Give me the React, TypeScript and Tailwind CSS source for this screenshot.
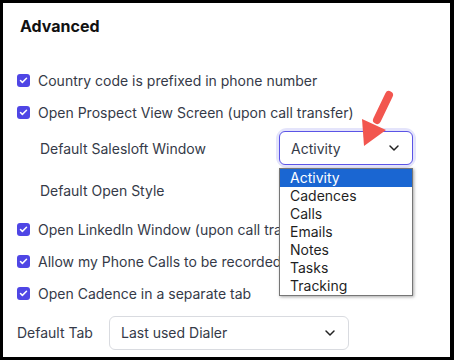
import { Check, ChevronDown } from "lucide-react";

const options = ["Activity", "Cadences", "Calls", "Emails", "Notes", "Tasks", "Tracking"];

function Box() {
  return (
    <span className="flex h-[13px] w-[13px] shrink-0 items-center justify-center rounded-[3px] bg-[#4f46e5]">
      <Check className="h-[9px] w-[9px] text-white" strokeWidth={4} />
    </span>
  );
}

function CheckRow({ label, h = "h-8" }: { label: string; h?: string }) {
  return (
    <div className={`flex items-center gap-[8px] pl-[14px] ${h}`}>
      <Box />
      <span className="whitespace-nowrap">{label}</span>
    </div>
  );
}

export default function App() {
  return (
    <div
      className="relative h-[360px] w-[454px] overflow-hidden border-t-[3px] border-r-4 border-b-[3px] border-l-[3px] border-black bg-white text-[14px] text-[#353a48]"
      style={{ fontFamily: "Inter, 'Noto Sans', sans-serif" }}
    >
      <div className="flex flex-col">
        <h2 className="pl-[17px] pt-[11px] text-[16px] font-bold leading-6 text-[#111]">Advanced</h2>
        <div className="h-[26px]" />
        <CheckRow label="Country code is prefixed in phone number" />
        <CheckRow label="Open Prospect View Screen (upon call transfer)" />

        <div className="flex h-[40px] items-center pl-[37px]">
          <span className="w-[239px]">Default Salesloft Window</span>
          <div className="rounded-[8px] ring-[3px] ring-[#e4e4fb]">
            <div className="flex h-[34px] w-[134px] items-center justify-between rounded-[6px] border border-[#5b54e6] pl-[11px] pr-[10px]">
              <span>Activity</span>
              <ChevronDown className="h-4 w-4 text-[#222]" strokeWidth={2.2} />
            </div>
          </div>
        </div>

        <div className="flex h-[45px] items-center pl-[37px]">
          <span className="w-[239px]">Default Open Style</span>
        </div>

        <CheckRow label="Open LinkedIn Window (upon call transfer)" />
        <CheckRow label="Allow my Phone Calls to be recorded" />
        <CheckRow label="Open Cadence in a separate tab" h="h-[33px]" />

        <div className="mt-[3px] flex h-[39px] items-center pl-[14px]">
          <span className="w-[92px]">Default Tab</span>
          <div className="flex h-[34px] w-[240px] items-center justify-between rounded-[6px] border border-[#d9dbe0] pl-[11px] pr-[10px]">
            <span>Last used Dialer</span>
            <ChevronDown className="h-4 w-4 text-[#222]" strokeWidth={2.2} />
          </div>
        </div>
      </div>

      <ul className="absolute left-[276px] top-[165px] w-[134px] border border-[#767676] bg-white text-[14px] leading-[18px] text-[#1f1f1f] shadow-[1px_1px_3px_rgba(0,0,0,0.35)]">
        {options.map((o, i) => (
          <li key={o} className={i === 0 ? "bg-[#1a66d2] pl-[10px] text-white" : "pl-[10px]"}>
            {o}
          </li>
        ))}
      </ul>

      <svg className="pointer-events-none absolute left-[-3px] top-[-3px]" width="454" height="360">
        <line x1="389" y1="95" x2="377" y2="120" stroke="#f2564f" strokeWidth="8" strokeLinecap="round" />
        <polygon points="362,119 386,130 364,146" fill="#f2564f" />
      </svg>
    </div>
  );
}
